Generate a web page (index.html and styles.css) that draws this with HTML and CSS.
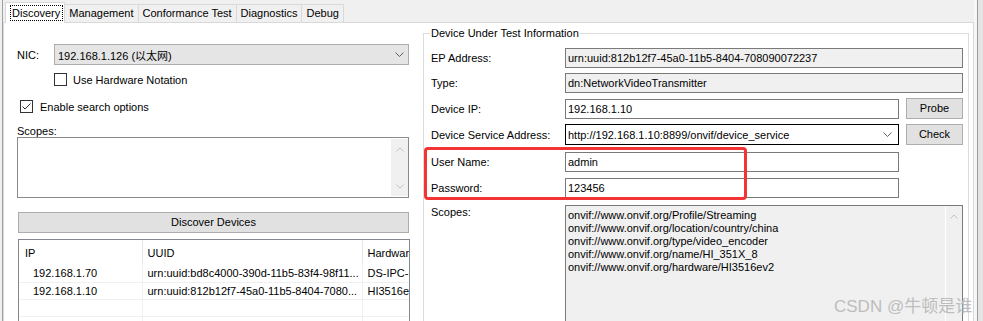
FILE: index.html
```html
<!DOCTYPE html>
<html lang="en">

<head>
    <meta charset="UTF-8">
    <title>ONVIF Device Test Tool</title>
    <link rel="stylesheet" href="styles.css">
</head>

<body>
    <div class="window">
        <div class="edge-left"></div>
        <div class="tabctrl">
            <div class="tabstrip">
                <div class="tab active"><span class="focus">Discovery</span></div>
                <div class="tab">Management</div>
                <div class="tab">Conformance Test</div>
                <div class="tab">Diagnostics</div>
                <div class="tab">Debug</div>
            </div>
            <div class="tabpage">
                <div class="left">
                    <div class="nic-row">
                        <span class="nic-label">NIC:</span>
                        <div class="combo nic">
                            <span>192.168.1.126 (以太网)</span>
                            <svg class="chev" width="9" height="5" viewBox="0 0 9 5"><path d="M0.5 0.5 L4.5 4.5 L8.5 0.5" fill="none" stroke="#606060"/></svg>
                        </div>
                    </div>
                    <div class="check hw"><span class="box"></span>Use Hardware Notation</div>
                    <div class="check search">
                        <span class="box">
                            <svg width="11" height="11" viewBox="0 0 11 11"><path d="M1.5 5.5 L4 8 L9.5 2.5" fill="none" stroke="#333"/></svg>
                        </span>Enable search options
                    </div>
                    <div class="scopes-label">Scopes:</div>
                    <div class="memo">
                        <div class="vscroll">
                            <svg width="8" height="5" viewBox="0 0 8 5"><path d="M0.5 4.5 L4 1 L7.5 4.5" fill="none" stroke="#c2c2c2"/></svg>
                            <svg width="8" height="5" viewBox="0 0 8 5"><path d="M0.5 0.5 L4 4 L7.5 0.5" fill="none" stroke="#c2c2c2"/></svg>
                        </div>
                    </div>
                    <div class="button discover">Discover Devices</div>
                    <div class="listview">
                        <table>
                            <tr class="head">
                                <th class="c-ip">IP</th>
                                <th class="c-uuid">UUID</th>
                                <th class="c-hw">Hardware</th>
                            </tr>
                            <tr>
                                <td class="c-ip ip">192.168.1.70</td>
                                <td class="c-uuid">urn:uuid:bd8c4000-390d-11b5-83f4-98f11...</td>
                                <td class="c-hw">DS-IPC-E</td>
                            </tr>
                            <tr>
                                <td class="c-ip ip">192.168.1.10</td>
                                <td class="c-uuid">urn:uuid:812b12f7-45a0-11b5-8404-7080...</td>
                                <td class="c-hw">HI3516ev2</td>
                            </tr>
                            <tr>
                                <td class="c-ip"></td>
                                <td class="c-uuid"></td>
                                <td class="c-hw"></td>
                            </tr>
                            <tr>
                                <td class="c-ip"></td>
                                <td class="c-uuid"></td>
                                <td class="c-hw"></td>
                            </tr>
                        </table>
                    </div>
                </div>

                <fieldset class="group">
                    <legend>Device Under Test Information</legend>
                    <div class="row r-ep">
                        <span class="lbl">EP Address:</span>
                        <div class="field ro">urn:uuid:812b12f7-45a0-11b5-8404-708090072237</div>
                    </div>
                    <div class="row r-type">
                        <span class="lbl">Type:</span>
                        <div class="field ro">dn:NetworkVideoTransmitter</div>
                    </div>
                    <div class="row r-ip">
                        <span class="lbl">Device IP:</span>
                        <div class="field short">192.168.1.10</div>
                        <div class="button side">Probe</div>
                    </div>
                    <div class="row r-dsa">
                        <span class="lbl">Device Service Address:</span>
                        <div class="field short focused">
                            <span>http://192.168.1.10:8899/onvif/device_service</span>
                            <svg class="chev" width="9" height="5" viewBox="0 0 9 5"><path d="M0.5 0.5 L4.5 4.5 L8.5 0.5" fill="none" stroke="#606060"/></svg>
                        </div>
                        <div class="button side">Check</div>
                    </div>
                    <div class="row r-user">
                        <span class="lbl">User Name:</span>
                        <div class="field short">admin</div>
                    </div>
                    <div class="row r-pass">
                        <span class="lbl">Password:</span>
                        <div class="field short">123456</div>
                    </div>
                    <div class="row r-scopes">
                        <span class="lbl">Scopes:</span>
                        <div class="field ro scopes">
                            <div class="lines">
                                onvif://www.onvif.org/Profile/Streaming<br>
                                onvif://www.onvif.org/location/country/china<br>
                                onvif://www.onvif.org/type/video_encoder<br>
                                onvif://www.onvif.org/name/HI_351X_8<br>
                                onvif://www.onvif.org/hardware/HI3516ev2
                            </div>
                            <div class="vscroll">
                                <svg width="8" height="5" viewBox="0 0 8 5"><path d="M0.5 4.5 L4 1 L7.5 4.5" fill="none" stroke="#c2c2c2"/></svg>
                            </div>
                        </div>
                    </div>
                </fieldset>
            </div>
        </div>
        <div class="edge-right"></div>
    </div>

    <!-- annotation drawn over the screenshot -->
    <div class="mark"></div>
    <div class="watermark">CSDN @牛顿是谁</div>
</body>

</html>
```

FILE: styles.css
```css
body {
    margin: 0px;
    width: 983px;
    height: 321px;
    overflow: hidden;
    position: relative;
    background-color: #ffffff;
    color: #000000;
    font-family: "Liberation Sans", Arial, "Noto Sans CJK SC", sans-serif;
    font-size: 11px;
}

.window {
    display: flex;
    height: 321px;
}

.edge-left {
    width: 2px;
    background-color: #f0f0f0;
    border-right: 1px solid #a0a0a0;
}

.edge-right {
    width: 9px;
    background: linear-gradient(to right, #f7f7f7 0 3px, #9c9c9c 3px 4px, #e4e4e4 4px);
}

.tabctrl {
    flex: 1;
    display: flex;
    flex-direction: column;
    min-width: 0;
}

.tabstrip {
    height: 22px;
    display: flex;
    align-items: flex-end;
    padding-left: 2px;
    background-color: #f0f0f0;
}

.tab {
    height: 18px;
    line-height: 17px;
    padding: 0 4px;
    box-sizing: border-box;
    border: 1px solid #d9d9d9;
    border-bottom: none;
    margin-left: -1px;
    background-color: #f0f0f0;
    white-space: nowrap;
}

.tab.active {
    height: 21px;
    margin-bottom: -1px;
    margin-left: 0px;
    padding: 2px 1px 0 4px;
    background-color: #ffffff;
    position: relative;
    z-index: 1;
}

.focus {
    display: block;
    height: 14px;
    line-height: 14px;
    padding: 0 2px 0 1px;
    border: 1px dotted #000000;
}

.tabpage {
    flex: 1;
    display: flex;
    align-items: flex-start;
    overflow: hidden;
    background-color: #ffffff;
    border: 1px solid #d9d9d9;
    border-bottom: none;
}

/* left side */

.left {
    width: 392px;
    padding: 21px 14px 0 13px;
    flex-shrink: 0;
}

.nic-row {
    display: flex;
    align-items: center;
    height: 21px;
}

.nic-label {
    width: 37px;
}

.combo {
    flex: 1;
    height: 21px;
    box-sizing: border-box;
    display: flex;
    align-items: center;
    justify-content: space-between;
    padding: 0 4px 0 3px;
    border: 1px solid #adadad;
}

.nic {
    background-color: #e5e5e5;
}

.check {
    display: flex;
    align-items: center;
    height: 13px;
}

.box {
    width: 13px;
    height: 13px;
    box-sizing: border-box;
    border: 1px solid #333333;
    background-color: #ffffff;
    margin-right: 6px;
    display: flex;
}

.hw {
    margin: 8px 0 0 37px;
}

.search {
    margin: 14px 0 0 3px;
}

.search .box {
    margin-right: 7px;
}

.scopes-label {
    margin-top: 12px;
    height: 12px;
    line-height: 12px;
}

.memo {
    height: 61px;
    box-sizing: border-box;
    border: 1px solid #8a8a8a;
    display: flex;
    justify-content: flex-end;
    padding: 1px 0;
}

.vscroll {
    width: 17px;
    background-color: #f0f0f0;
    display: flex;
    flex-direction: column;
    align-items: center;
    justify-content: space-between;
    padding: 8px 0 7px;
    box-sizing: border-box;
}

.button {
    height: 21px;
    box-sizing: border-box;
    border: 1px solid #adadad;
    background-color: #e1e1e1;
    text-align: center;
    line-height: 19px;
}

.discover {
    margin: 14px 0 0 1px;
    width: 391px;
}

.listview {
    margin: 6px 0 0 1px;
    width: 392px;
    height: 90px;
    box-sizing: border-box;
    border: 1px solid #828790;
    border-bottom: none;
    overflow: hidden;
}

.listview table {
    table-layout: fixed;
    border-collapse: collapse;
    width: 560px;
}

.listview th,
.listview td {
    padding: 0 0 0 5px;
    text-align: left;
    font-weight: normal;
    white-space: nowrap;
    overflow: hidden;
    box-sizing: border-box;
}

.listview th {
    height: 25px;
    border-right: 1px solid #e5e5e5;
}

.listview td {
    height: 17px;
    border-right: 1px solid #f0f0f0;
    border-bottom: 1px solid #f0f0f0;
}

.c-ip {
    width: 123px;
}

.listview th.c-ip {
    padding-left: 6px;
}

.listview td.ip {
    padding-left: 14px;
}

.c-uuid {
    width: 220px;
}

/* right side */

.group {
    width: 546px;
    box-sizing: border-box;
    margin: 4px 0 0 0;
    padding: 0 5px 0 7px;
    border: 1px solid #dcdcdc;
    min-width: 0;
    flex-shrink: 0;
}

.group legend {
    padding: 0 1px;
    margin-left: -1px;
    line-height: 13px;
}

.row {
    display: flex;
    align-items: flex-end;
}

.lbl {
    width: 134px;
    flex-shrink: 0;
    align-self: center;
}

.field {
    flex: 1;
    height: 20px;
    box-sizing: border-box;
    border: 1px solid #7a7a7a;
    background-color: #ffffff;
    padding: 0 2px;
    display: flex;
    align-items: center;
    white-space: nowrap;
}

.field.ro {
    background-color: #f0f0f0;
}

.field.short {
    flex: none;
    width: 334px;
}

.field.focused {
    height: 21px;
    border-color: #000000;
    justify-content: space-between;
    padding-right: 6px;
}

.button.side {
    width: 57px;
    margin-left: 7px;
}

.r-ep {
    margin-top: 8px;
}

.r-type {
    margin-top: 5px;
}

.r-ip {
    margin-top: 5px;
    height: 21px;
}

.r-dsa {
    margin-top: 5px;
}

.r-user {
    margin-top: 7px;
}

.r-pass {
    margin-top: 6px;
}

.r-scopes {
    margin-top: 7px;
    align-items: flex-start;
}

.r-scopes .lbl {
    align-self: flex-start;
    padding-top: 1px;
}

.field.scopes {
    height: 130px;
    padding: 0;
    align-items: stretch;
}

.lines {
    flex: 1;
    padding: 3px 0 0 2px;
    line-height: 13px;
}

.scopes .vscroll {
    justify-content: flex-start;
    border-left: 1px solid #ffffff;
    padding-top: 8px;
}

/* overlays */

.mark {
    position: absolute;
    left: 424px;
    top: 147px;
    width: 323px;
    height: 53px;
    box-sizing: border-box;
    border: 3px solid #f23434;
    border-radius: 4px;
}

.watermark {
    position: absolute;
    left: 834px;
    top: 292px;
    font-size: 17px;
    color: #bdbdbd;
    white-space: nowrap;
}
```
